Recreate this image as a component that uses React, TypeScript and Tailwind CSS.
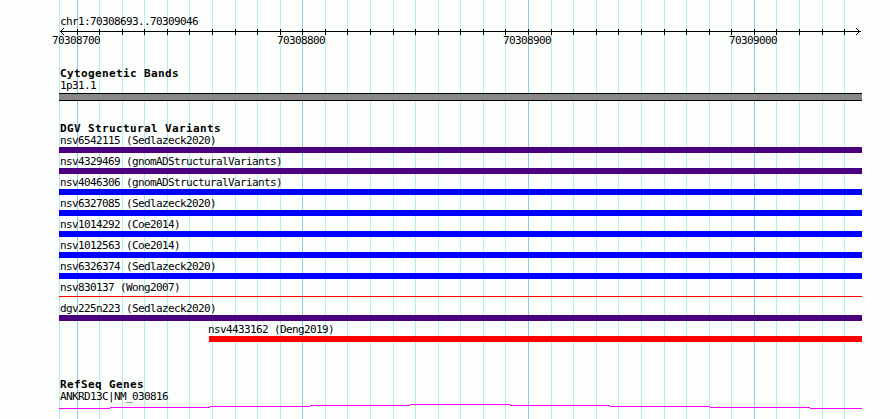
const TICKS = Array.from({ length: 35 }, (_, i) => 77 + i * 22.577);

const MAJORS = [
  { i: 0, label: "70308700" },
  { i: 10, label: "70308800" },
  { i: 20, label: "70308900" },
  { i: 30, label: "70309000" },
];

const variants = [
  { label: "nsv6542115 (Sedlazeck2020)", bar: "bg-[#4b0082]" },
  { label: "nsv4329469 (gnomADStructuralVariants)", bar: "bg-[#4b0082]" },
  { label: "nsv4046306 (gnomADStructuralVariants)", bar: "bg-[#0000ff]" },
  { label: "nsv6327085 (Sedlazeck2020)", bar: "bg-[#0000ff]" },
  { label: "nsv1014292 (Coe2014)", bar: "bg-[#0000ff]" },
  { label: "nsv1012563 (Coe2014)", bar: "bg-[#0000ff]" },
  { label: "nsv6326374 (Sedlazeck2020)", bar: "bg-[#0000ff]" },
  { label: "nsv830137 (Wong2007)", bar: "thin" },
  { label: "dgv225n223 (Sedlazeck2020)", bar: "bg-[#4b0082]" },
];

// gene intron line, one pixel row per 100px step
const geneSteps = [
  { x1: 59, x2: 110, y: 408 },
  { x1: 110, x2: 210, y: 407 },
  { x1: 210, x2: 310, y: 406 },
  { x1: 310, x2: 410, y: 405 },
  { x1: 410, x2: 510, y: 404 },
  { x1: 510, x2: 610, y: 405 },
  { x1: 610, x2: 710, y: 406 },
  { x1: 710, x2: 810, y: 407 },
  { x1: 810, x2: 862, y: 408 },
];

function Guidelines() {
  return (
    <svg className="absolute inset-0" width={890} height={419}>
      <rect x={59} y={0} width={1} height={419} fill="#b0eef0" />
      {TICKS.map((x, i) => (
        <rect
          key={i}
          x={Math.floor(x)}
          y={0}
          width={1}
          height={419}
          fill={i % 10 === 0 ? "#88cbea" : "#b0eef0"}
        />
      ))}
    </svg>
  );
}

function Ruler() {
  return (
    <svg width={890} height={18} className="block">
      <rect x={60} y={3} width={801} height={1} fill="#000" />
      <path d="M64 0 L60.5 3.5 L64 7" fill="none" stroke="#000" strokeWidth={1} />
      <path d="M856 0 L859.5 3.5 L856 7" fill="none" stroke="#000" strokeWidth={1} />
      {TICKS.map((x, i) => (
        <rect key={i} x={Math.floor(x)} y={1} width={1} height={6} fill="#000" />
      ))}
      {MAJORS.map((m) => (
        <text
          key={m.i}
          x={Math.floor(TICKS[m.i]) - 1}
          y={16}
          textAnchor="middle"
          fontFamily="'DejaVu Sans Mono', monospace"
          fontSize={11}
          letterSpacing={-0.62}
          fill="#000"
        >
          {m.label}
        </text>
      ))}
    </svg>
  );
}

function Header({ children }: { children: string }) {
  return <div className="h-[12px] pl-[60px] font-bold tracking-[0.38px]">{children}</div>;
}

function Label({ children, indent = "pl-[60px]" }: { children: string; indent?: string }) {
  return <div className={`h-[12px] ${indent} whitespace-nowrap`}>{children}</div>;
}

export default function App() {
  return (
    <div className="relative w-[890px] h-[419px] overflow-hidden bg-[#fcfefc] text-black font-['DejaVu_Sans_Mono',monospace] text-[11px] leading-[12px] tracking-[-0.62px]">
      <Guidelines />
      <div className="relative flex flex-col pt-[16px]">
        <Label>chr1:70308693..70309046</Label>
        <Ruler />

        {/* Cytogenetic Bands */}
        <div className="mt-[22px]">
          <Header>Cytogenetic Bands</Header>
          <Label>1p31.1</Label>
          <div className="mt-px ml-[59px] w-[803px] h-[8px] border-y border-black bg-[#888888]" />
        </div>

        {/* DGV Structural Variants */}
        <div className="mt-[22px]">
          <Header>DGV Structural Variants</Header>
          {variants.map((v) => (
            <div key={v.label} className="mb-[3px]">
              <Label>{v.label}</Label>
              {v.bar === "thin" ? (
                <div className="h-[6px] pt-[2px] ml-[59px] w-[803px]">
                  <div className="h-px bg-[#ff0000]" />
                </div>
              ) : (
                <div className={`h-[6px] ml-[59px] w-[803px] ${v.bar}`} />
              )}
            </div>
          ))}
          <div className="mb-[3px]">
            <Label indent="pl-[208px]">nsv4433162 (Deng2019)</Label>
            <div className="h-[6px] ml-[209px] w-[653px] bg-[#ff0000]" />
          </div>
        </div>

        {/* RefSeq Genes */}
        <div className="mt-[34px]">
          <Header>RefSeq Genes</Header>
          <Label>ANKRD13C|NM_030816</Label>
          <svg width={890} height={8} className="block">
            {geneSteps.map((s) => (
              <rect key={s.x1} x={s.x1} y={s.y - 403} width={s.x2 - s.x1} height={1} fill="#ff00ff" />
            ))}
          </svg>
        </div>
      </div>
    </div>
  );
}
